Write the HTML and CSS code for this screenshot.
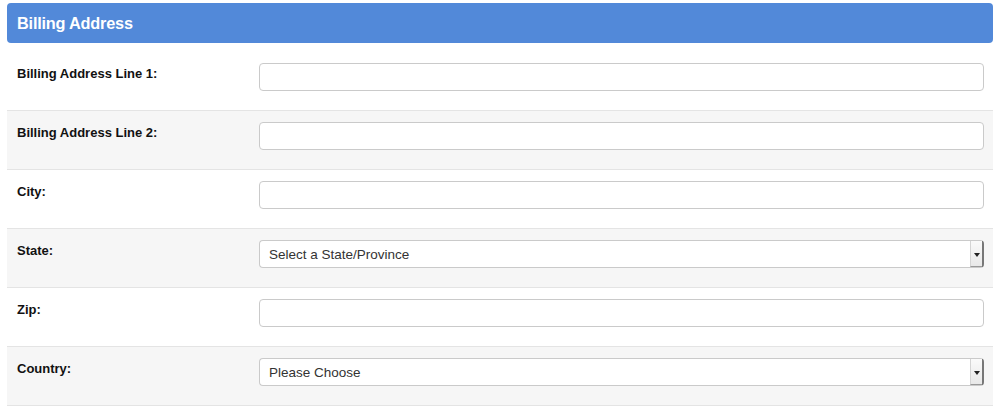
FILE: index.html
```html
<!DOCTYPE html>
<html>
<head>
<meta charset="utf-8">
<link rel="stylesheet" href="styles.css">
</head>
<body>
<div class="panel">
  <div class="panel-heading">Billing Address</div>
  <div class="rows">
    <div class="row">
      <label class="label">Billing Address Line 1:</label>
      <div class="field"><input class="input" type="text"></div>
    </div>
    <div class="row alt">
      <label class="label">Billing Address Line 2:</label>
      <div class="field"><input class="input" type="text"></div>
    </div>
    <div class="row">
      <label class="label">City:</label>
      <div class="field"><input class="input" type="text"></div>
    </div>
    <div class="row alt">
      <label class="label">State:</label>
      <div class="field">
        <div class="select-wrap">
          <select class="select"><option>Select a State/Province</option></select>
          <span class="arrow"></span>
        </div>
      </div>
    </div>
    <div class="row">
      <label class="label">Zip:</label>
      <div class="field"><input class="input" type="text"></div>
    </div>
    <div class="row alt">
      <label class="label">Country:</label>
      <div class="field">
        <div class="select-wrap">
          <select class="select"><option>Please Choose</option></select>
          <span class="arrow"></span>
        </div>
      </div>
    </div>
  </div>
</div>
</body>
</html>
```
FILE: styles.css
```css
* { box-sizing: border-box; }
html, body { margin: 0; padding: 0; background: #fff; }
body {
  font-family: "Liberation Sans", Arial, Helvetica, sans-serif;
  color: #333;
  padding: 3px 7px 0 7px;
}
.panel-heading {
  background: #5289d9;
  color: #fff;
  font-weight: bold;
  font-size: 16.3px;
  height: 40px;
  line-height: 40px;
  padding-left: 10px;
  border-radius: 4px;
  letter-spacing: -0.2px;
}
.rows { margin-top: 9px; }
.row {
  display: flex;
  align-items: flex-start;
  height: 59px;
  padding: 11px 9px 0 10px;
  border-bottom: 1px solid #e4e4e4;
}
.row:first-child { padding-top: 11px; }
.row.alt { background: #f6f6f6; }
.label {
  width: 242px;
  flex: none;
  font-weight: bold;
  font-size: 13px;
  color: #111;
  padding-top: 2px;
  line-height: 17px;
}
.field { flex: 1; }
.input {
  display: block;
  width: 100%;
  height: 28px;
  border: 1px solid #cacaca;
  border-radius: 4px;
  background: #fff;
  margin: 0;
}
.select-wrap { position: relative; }
.select {
  display: block;
  width: 100%;
  height: 28px;
  appearance: none;
  -webkit-appearance: none;
  border: 1px solid #cacaca;
  border-right: 2px solid #777;
  border-radius: 4px;
  background: #fff;
  font-family: "Liberation Sans", Arial, sans-serif;
  font-size: 13.5px;
  color: #333;
  padding: 0 0 0 9px;
  margin: 0;
}
.arrow {
  position: absolute;
  right: 2px;
  top: 1px;
  bottom: 1px;
  width: 12px;
  background: linear-gradient(#fafafa, #e8e8e8);
  border-left: 1px solid #d4d4d4;
  border-bottom: 1px solid #999;
}
.arrow::after {
  content: "";
  position: absolute;
  left: 3px;
  top: 12px;
  border-left: 3px solid transparent;
  border-right: 3px solid transparent;
  border-top: 4px solid #222;
}
```
